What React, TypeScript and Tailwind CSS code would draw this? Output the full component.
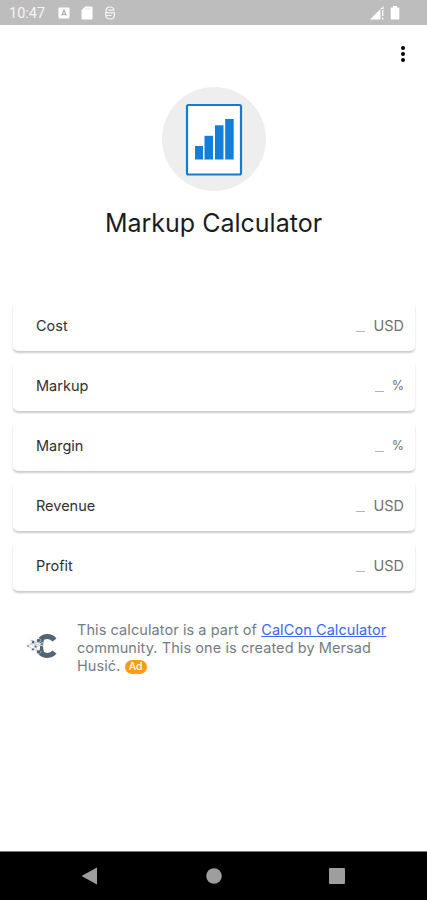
const fields = [
  { label: "Cost", unit: "USD" },
  { label: "Markup", unit: "%" },
  { label: "Margin", unit: "%" },
  { label: "Revenue", unit: "USD" },
  { label: "Profit", unit: "USD" },
];

function StatusBar() {
  return (
    <div className="flex h-[25px] flex-none items-center bg-[#bdbdbd] pl-[9px] pr-[27px] text-[#f5f5f5]">
      <span className="w-[49px] pt-[3px] font-['Roboto',sans-serif] text-[14.5px] leading-none">
        10:47
      </span>
      <svg className="h-[12px] w-[12px]" viewBox="0 0 12 12">
        <rect x="0.5" y="0.5" width="11" height="11" rx="1" fill="#fff" />
        <path d="M3.7 8.8 6 3.2l2.3 5.6M4.5 7.2h3" fill="none" stroke="#aaa" strokeWidth="1.1" />
      </svg>
      <svg className="ml-[11px] h-[14px] w-[12px]" viewBox="0 0 12 14">
        <path d="M4.2 0.5H10.5a1 1 0 0 1 1 1v11a1 1 0 0 1-1 1h-9a1 1 0 0 1-1-1V4.2z" fill="#fff" />
        <path d="M5 2v2M7 2v2M9 2v2" stroke="#ddd" strokeWidth="0.8" />
      </svg>
      <svg className="ml-[11px] h-[14px] w-[12px]" viewBox="0 0 12 14" fill="none" stroke="#f5f5f5" strokeWidth="1.2">
        <path d="M10 4.5C10 2.2 8.400 1 6 1S2 2.500 2 4.500s1.200 2.400 2.500 2.400h6v2C10.500 11.600 8.600 13 6 13s-4.200-1.400-4.200-4.200V6M4.500 4.200h5.500M2 9.500h5.500" />
      </svg>
      <svg className="ml-auto h-[14px] w-[14px]" viewBox="0 0 14 14">
        <path d="M0 13.5 13.5 0v3H10.5v10.5z" fill="#fff" />
        <path d="M12.7 4v6M12.7 11.5v2" stroke="#fff" strokeWidth="1.3" />
      </svg>
      <svg className="ml-[6px] h-[14px] w-[10px]" viewBox="0 0 10 14">
        <path d="M3 0h4v1.5h1.5a.8.8 0 0 1 .8.8v10.4a.8.8 0 0 1-.8.8h-7a.8.8 0 0 1-.8-.8V2.3a.8.8 0 0 1 .8-.8H3z" fill="#fff" />
      </svg>
    </div>
  );
}

function ChartLogo() {
  return (
    <svg className="h-[104px] w-[104px]" viewBox="0 0 104 104">
      <circle cx="52" cy="52" r="52" fill="#eeeeee" />
      <rect x="25" y="18" width="54" height="69.5" rx="1.5" fill="#fff" stroke="#137bd4" strokeWidth="2.2" />
      <g fill="#137fd8">
        <rect x="33" y="59" width="8" height="13.5" />
        <rect x="42.5" y="48.8" width="8.5" height="23.7" />
        <rect x="53" y="38.3" width="8.5" height="34.2" />
        <rect x="63.2" y="32" width="8.5" height="40.5" />
      </g>
    </svg>
  );
}

function CalConLogo() {
  return (
    <svg className="h-[28px] w-[32px]" viewBox="0 0 32 28">
      <path
        d="M14.500 7.500C18 3.500 25 3.500 28.500 8M14.500 20.500C18 24.500 25 24.500 28.500 20"
        fill="none"
        stroke="#526575"
        strokeWidth="5"
      />
      <path d="M13 8.500c1.500 3.500 1.500 7.500 0 11l5 .5c-1.300-4-1.300-8 0-12z" fill="#526575" />
      <path d="M1 14 15 9M1 14l13 6M4 11l13 3M5 18l13-7M7 8l5 12M4 8l12 4" stroke="#bdc7cf" strokeWidth="0.9" />
      <g fill="#526575">
        <circle cx="2" cy="14" r="0.8" />
        <circle cx="7" cy="10" r="1.3" />
        <circle cx="12.5" cy="8.5" r="1.8" />
        <circle cx="9.5" cy="14.5" r="1.1" />
        <circle cx="7" cy="17.5" r="1" />
        <circle cx="12.5" cy="20" r="1.8" />
      </g>
      <circle cx="16" cy="12" r="1.5" fill="#526575" stroke="#fff" strokeWidth="0.6" />
    </svg>
  );
}

function FieldRow({ label, unit }: { label: string; unit: string }) {
  return (
    <label className="flex h-[50px] items-center justify-between rounded-[5px] bg-white pl-[23px] pr-[11px] text-[14.5px] shadow-[0_2px_2px_rgba(0,0,0,0.2)]">
      <span className="text-[#303030]">{label}</span>
      <span className="flex items-center gap-[8px] text-[#707070]">
        <span className="h-px w-[9px] translate-y-[5px] bg-[#b5b5b5]" />
        <span className={unit === "%" ? "text-[12.5px]" : undefined}>{unit}</span>
      </span>
    </label>
  );
}

function NavBar() {
  return (
    <div className="flex h-[49px] flex-none items-center border-t border-[#777777] bg-black pl-[81px]">
      <svg className="h-[18px] w-[17px]" viewBox="0 0 17 18">
        <path d="M0.5 9 16 0.5v17z" fill="#9e9e9e" />
      </svg>
      <svg className="ml-[108px] h-[16px] w-[16px]" viewBox="0 0 16 16">
        <circle cx="8" cy="8" r="7.8" fill="#9e9e9e" />
      </svg>
      <span className="ml-[107px] h-[16px] w-[16px] rounded-[1px] bg-[#9e9e9e]" />
    </div>
  );
}

export default function App() {
  return (
    <div className="flex h-[900px] w-[427px] flex-col overflow-hidden bg-white font-['Inter',sans-serif]">
      <StatusBar />
      <header className="flex h-[62px] justify-end pr-[21px] pt-[20px]">
        <button aria-label="More options" className="h-[18px] w-[6px]">
          <svg className="h-[18px] w-[6px]" viewBox="0 0 6 18">
            <circle cx="3" cy="3" r="2" />
            <circle cx="3" cy="9" r="2" />
            <circle cx="3" cy="15" r="2" />
          </svg>
        </button>
      </header>
      <div className="flex flex-col items-center">
        <ChartLogo />
        <h1 className="mt-[14px] h-[36px] text-[25px] leading-[36px] text-[#1c1c1c]">
          Markup Calculator
        </h1>
      </div>
      <main className="mt-[60px] flex flex-col gap-[10px] pl-[13px] pr-[12px]">
        {fields.map((field) => (
          <FieldRow key={field.label} label={field.label} unit={field.unit} />
        ))}
      </main>
      <footer className="mt-[30px] flex pl-[26px]">
        <div className="w-[51px] pt-[11px]">
          <CalConLogo />
        </div>
        <p className="h-[54px] w-[330px] text-[14.5px] leading-[18px] tracking-[0.08px] text-[#747c83]">
          This calculator is a part of{" "}
          <a href="#" className="text-[#3b68f0] underline">
            CalCon Calculator
          </a>
          <br />
          community. This one is created by Mersad
          <br />
          Husić.{" "}
          <span className="inline-block h-[14px] rounded-full bg-[#ff9c12] px-[4px] align-[1px] text-[10.5px] font-medium leading-[14px] text-white">
            Ad
          </span>
        </p>
      </footer>
      <div className="flex-1" />
      <NavBar />
    </div>
  );
}
